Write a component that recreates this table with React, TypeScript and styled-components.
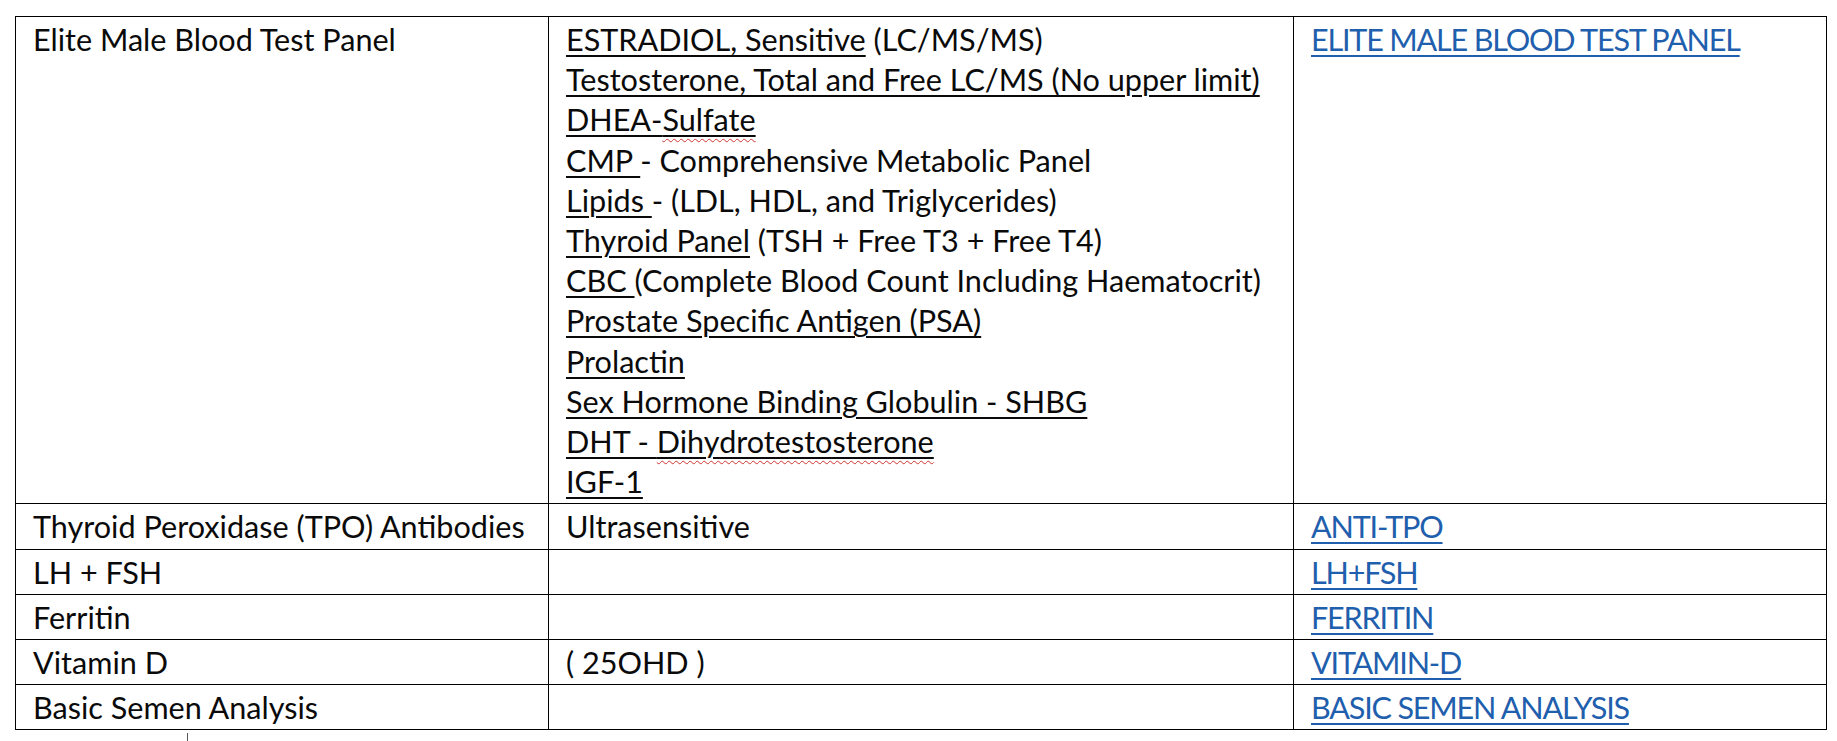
import React from 'react';
import styled, { createGlobalStyle } from 'styled-components';

const GlobalStyle = createGlobalStyle`
    html, body {
        margin: 0;
        padding: 0;
        background: #ffffff;
    }
`;

type Part = { text: string; u?: boolean; typo?: string };
type Line = Part[];

const panelLines: Line[] = [
    [{ text: 'ESTRADIOL, Sensitive', u: true }, { text: ' (LC/MS/MS)' }],
    [{ text: 'Testosterone, Total and Free LC/MS (No upper limit)', u: true }],
    [{ text: 'DHEA-', u: true }, { text: '', u: true, typo: 'Sulfate' }],
    [{ text: 'CMP ', u: true }, { text: '- Comprehensive Metabolic Panel' }],
    [{ text: 'Lipids ', u: true }, { text: '- (LDL, HDL, and Triglycerides)' }],
    [{ text: 'Thyroid Panel', u: true }, { text: ' (TSH + Free T3 + Free T4)' }],
    [{ text: 'CBC ', u: true }, { text: '(Complete Blood Count Including Haematocrit)' }],
    [{ text: 'Prostate Specific Antigen (PSA)', u: true }],
    [{ text: 'Prolactin', u: true }],
    [{ text: 'Sex Hormone Binding Globulin - SHBG', u: true }],
    [{ text: 'DHT - ', u: true }, { text: '', u: true, typo: 'Dihydrotestosterone' }],
    [{ text: 'IGF-1', u: true }],
];

const simpleRows = [
    { name: 'Thyroid Peroxidase (TPO) Antibodies', note: 'Ultrasensitive', link: 'ANTI-TPO' },
    { name: 'LH + FSH', note: '', link: 'LH+FSH' },
    { name: 'Ferritin', note: '', link: 'FERRITIN' },
    { name: 'Vitamin D', note: '( 25OHD )', link: 'VITAMIN-D' },
    { name: 'Basic Semen Analysis', note: '', link: 'BASIC SEMEN ANALYSIS' },
];

const renderLine = (line: Line, i: number) => (
    <TextLine key={i}>
        {line.map((p, j) =>
            p.u ? (
                <Under key={j}>
                    {p.text}
                    {p.typo && <Squiggle>{p.typo}</Squiggle>}
                </Under>
            ) : (
                <span key={j}>{p.text}</span>
            )
        )}
    </TextLine>
);

const App = () => (
    <Page>
        <GlobalStyle />
        <Table>
            <colgroup>
                <col style={{ width: 533 }} />
                <col style={{ width: 745 }} />
                <col style={{ width: 533 }} />
            </colgroup>
            <tbody>
                <tr>
                    <Cell>Elite Male Blood Test Panel</Cell>
                    <Cell>{panelLines.map(renderLine)}</Cell>
                    <Cell>
                        <DocLink href="#">ELITE MALE BLOOD TEST PANEL</DocLink>
                    </Cell>
                </tr>
                {simpleRows.map(r => (
                    <tr key={r.name}>
                        <Cell>{r.name}</Cell>
                        <Cell>{r.note}</Cell>
                        <Cell>
                            <DocLink href="#">{r.link}</DocLink>
                        </Cell>
                    </tr>
                ))}
            </tbody>
        </Table>
        <EndMark />
    </Page>
);

export default App;

const Page = styled.div`
    padding: 16px 0 0 15px;
    width: 1837px;
    box-sizing: border-box;
`;

const Table = styled.table`
    border-collapse: collapse;
    table-layout: fixed;
    width: 1811px;

    font-family: Lato, 'Open Sans', sans-serif;
    font-size: 30.6px;
    line-height: 40.2px;
    color: #0a0a0a;
`;

const Cell = styled.td`
    border: 1.5px solid #000;
    padding: 3px 17px 1px;
    vertical-align: top;
    white-space: nowrap;
`;

const TextLine = styled.div`
    display: block;
`;

const Under = styled.span`
    text-decoration: underline;
    text-decoration-thickness: 2px;
    text-underline-offset: 4px;
`;

const Squiggle = styled.span`
    text-decoration: underline wavy #d0352f;
    text-decoration-thickness: 1px;
    text-underline-offset: 7px;
`;

const DocLink = styled.a`
    color: #1f5fad;
    letter-spacing: -1.2px;
    text-decoration: underline;
    text-decoration-thickness: 2px;
    text-underline-offset: 4px;
`;

const EndMark = styled.div`
    width: 1px;
    height: 9px;
    margin: 3px 0 0 172px;
    background: #555;
`;
